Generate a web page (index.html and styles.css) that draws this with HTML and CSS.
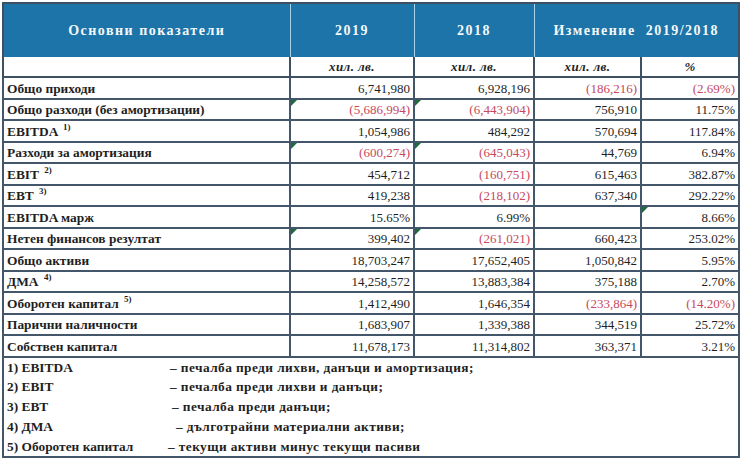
FILE: index.html
```html
<!DOCTYPE html>
<html lang="bg">
<head>
<meta charset="utf-8">
<title>Основни показатели</title>
<link rel="stylesheet" href="styles.css">
</head>
<body>
<table class="kpi">
  <colgroup>
    <col class="c-label">
    <col class="c-y1">
    <col class="c-y2">
    <col class="c-abs">
    <col class="c-pct">
  </colgroup>
  <thead>
    <tr class="head">
      <th class="h-label">Основни показатели</th>
      <th>2019</th>
      <th>2018</th>
      <th colspan="2" class="h-change">Изменение&nbsp; 2019/2018</th>
    </tr>
    <tr class="units">
      <td class="u-empty"></td>
      <td>хил. лв.</td>
      <td>хил. лв.</td>
      <td>хил. лв.</td>
      <td>%</td>
    </tr>
  </thead>
  <tbody class="data">
    <tr><th>Общо приходи</th><td>6,741,980</td><td>6,928,196</td><td class="neg">(186,216)</td><td class="neg">(2.69%)</td></tr>
    <tr><th>Общо разходи (без амортизации)</th><td class="neg flag">(5,686,994)</td><td class="neg flag">(6,443,904)</td><td>756,910</td><td>11.75%</td></tr>
    <tr><th>EBITDA <sup>1)</sup></th><td>1,054,986</td><td>484,292</td><td>570,694</td><td>117.84%</td></tr>
    <tr><th>Разходи за амортизация</th><td class="neg flag">(600,274)</td><td class="neg flag">(645,043)</td><td>44,769</td><td>6.94%</td></tr>
    <tr><th>EBIT <sup>2)</sup></th><td>454,712</td><td class="neg">(160,751)</td><td>615,463</td><td>382.87%</td></tr>
    <tr><th>EBT <sup>3)</sup></th><td>419,238</td><td class="neg">(218,102)</td><td>637,340</td><td>292.22%</td></tr>
    <tr><th>EBITDA марж</th><td>15.65%</td><td>6.99%</td><td></td><td class="flag">8.66%</td></tr>
    <tr><th>Нетен финансов резултат</th><td class="flag">399,402</td><td class="neg flag">(261,021)</td><td>660,423</td><td>253.02%</td></tr>
    <tr><th>Общо активи</th><td>18,703,247</td><td>17,652,405</td><td>1,050,842</td><td>5.95%</td></tr>
    <tr><th>ДМА <sup>4)</sup></th><td>14,258,572</td><td>13,883,384</td><td>375,188</td><td>2.70%</td></tr>
    <tr><th>Оборотен капитал <sup>5)</sup></th><td>1,412,490</td><td>1,646,354</td><td class="neg">(233,864)</td><td class="neg">(14.20%)</td></tr>
    <tr><th>Парични наличности</th><td>1,683,907</td><td>1,339,388</td><td>344,519</td><td>25.72%</td></tr>
    <tr><th>Собствен капитал</th><td>11,678,173</td><td>11,314,802</td><td>363,371</td><td>3.21%</td></tr>
  </tbody>
  <tbody class="notes">
    <tr><td colspan="5"><div class="note"><span class="term">1) EBITDA</span><span class="def">– печалба преди лихви, данъци и амортизация;</span></div></td></tr>
    <tr><td colspan="5"><div class="note"><span class="term">2) EBIT</span><span class="def">– печалба преди лихви и данъци;</span></div></td></tr>
    <tr><td colspan="5"><div class="note"><span class="term">3) EBT</span><span class="def d3">– печалба преди данъци;</span></div></td></tr>
    <tr><td colspan="5"><div class="note"><span class="term">4) ДМА</span><span class="def d4">– дълготрайни материални активи;</span></div></td></tr>
    <tr><td colspan="5"><div class="note"><span class="term">5) Оборотен капитал</span><span class="def d5">– текущи активи минус текущи пасиви</span></div></td></tr>
  </tbody>
</table>
</body>
</html>
```

FILE: styles.css
```css
html, body {
  margin: 0;
  padding: 0;
  background: #ffffff;
}

.kpi {
  margin: 2px 0 0 2px;
  width: 736px;
  table-layout: fixed;
  border-collapse: collapse;
  font-family: "Liberation Serif", "Times New Roman", serif;
  color: #1f1f1f;
  border: 2px solid #3e5163;
}

.c-label { width: 287px; }
.c-y1 { width: 124px; }
.c-y2 { width: 120px; }
.c-abs { width: 107px; }
.c-pct { width: 98px; }

/* header */
.head th {
  height: 53px;
  padding: 0;
  background: #1c74a9;
  color: #f4f8fb;
  font-size: 14px;
  font-weight: bold;
  letter-spacing: 1.5px;
  text-align: center;
  vertical-align: middle;
  border-left: 1px solid #a8d2ea;
}
.head th.h-label {
  border-left: none;
}

.units td {
  height: 19px;
  padding: 0;
  font-size: 13px;
  letter-spacing: 0.4px;
  font-weight: bold;
  font-style: italic;
  text-align: center;
  border: 2px solid #3e5163;
  border-top: none;
}
.units td.u-empty {
  border-left: 1px solid #c7ccd2;
}

/* data rows */
.data tr {
  height: 21.5px;
}
.data th,
.data td {
  padding: 1px 3px 0;
  border: 2px solid #44576a;
  font-size: 13px;
  line-height: 15px;
  vertical-align: middle;
  white-space: nowrap;
}
.data th {
  text-align: left;
  font-weight: bold;
  font-size: 13.4px;
  padding-left: 3px;
}
.data td {
  text-align: right;
  position: relative;
}
.data sup {
  font-size: 9px;
  line-height: 0;
  vertical-align: 6px;
  margin-left: 2px;
}
.neg {
  color: #c8485e;
}
.flag::before {
  content: "";
  position: absolute;
  left: 0;
  top: 0;
  border-top: 6px solid #1f6b3e;
  border-right: 6px solid transparent;
}

/* footnotes */
.notes tr {
  height: 20.1px;
}
.notes td {
  padding: 0 3px;
  border-left: 2px solid #44576a;
  border-right: 2px solid #44576a;
  vertical-align: middle;
}
.notes tr:first-child td {
  border-top: 2px solid #44576a;
}
.notes tr:last-child td {
  border-bottom: 2px solid #44576a;
}
.note {
  display: flex;
  font-size: 13.4px;
  font-weight: bold;
  line-height: 15px;
}
.term {
  width: 163px;
  flex: none;
}
.def { letter-spacing: 0.4px; }
.def.d3 { margin-left: 2px; }
.def.d4 { margin-left: 6px; }
.def.d5 { margin-left: -2px; }
```
